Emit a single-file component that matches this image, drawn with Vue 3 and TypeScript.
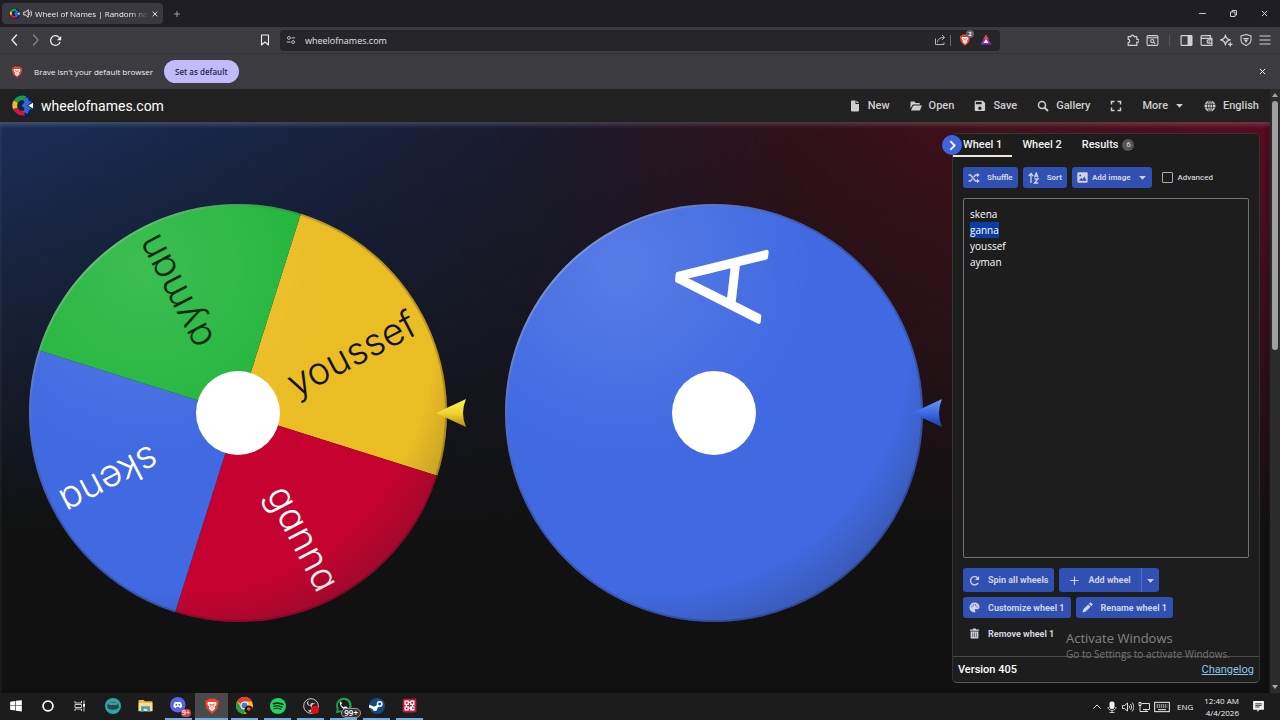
<script setup lang="ts">
import { h, onMounted, ref } from 'vue'

const glyphs: Record<string, string> = {
  close: '<path d="M5 5l14 14M19 5L5 19" fill="none" stroke="currentColor" stroke-width="2.6"/>',
  plus: '<path d="M12 3v18M3 12h18" fill="none" stroke="currentColor" stroke-width="2.4"/>',
  minimize: '<path d="M3 12h18" stroke="currentColor" stroke-width="2.4"/>',
  restore: '<path d="M4 8h12v12H4zM8 8V4h12v12h-4" fill="none" stroke="currentColor" stroke-width="2.4"/>',
  back: '<path d="M15 2L6 12l9 10" fill="none" stroke="currentColor" stroke-width="2.6" stroke-linecap="round"/>',
  forward: '<path d="M9 2l9 10-9 10" fill="none" stroke="currentColor" stroke-width="2.6" stroke-linecap="round"/>',
  reload: '<path d="M20.5 14.5A9 9 0 1 1 19 6.5" fill="none" stroke="currentColor" stroke-width="2.3"/><path d="M22.5 3.500v8h-8z" fill="currentColor"/>',
  bookmark: '<path d="M5 2h14v20l-7-6-7 6z" fill="none" stroke="currentColor" stroke-width="2.2" stroke-linejoin="round"/>',
  tune: '<g fill="none" stroke="currentColor" stroke-width="2.4"><circle cx="7" cy="7" r="3.500"/><circle cx="17" cy="17" r="3.500"/><path d="M13 7h9M2 17h9"/></g>',
  share: '<g fill="none" stroke="currentColor" stroke-width="2"><path d="M3 9v12h17v-4"/><path d="M7 17c0-6 4-10 14-10M16 2l5 5-5 5"/></g>',
  puzzle: '<path d="M4 5h5a3 3 0 1 1 6 0h5v5a2.800 2.800 0 1 1 0 5v6H4v-5a3 3 0 0 0 0-6z" fill="none" stroke="currentColor" stroke-width="2.2" stroke-linejoin="round"/>',
  finder: '<g fill="none" stroke="currentColor" stroke-width="2"><rect x="2" y="3" width="20" height="18" rx="2"/><path d="M2 7h20"/><circle cx="11.500" cy="13" r="3"/><path d="M14 15l3 3"/></g>',
  sidebar: '<rect x="2" y="3" width="20" height="18" rx="1" fill="none" stroke="currentColor" stroke-width="2.2"/><path d="M14 3h8v18h-8z" fill="currentColor"/>',
  wallet: '<g fill="none" stroke="currentColor" stroke-width="2.2"><path d="M19 7V3H4a2 2 0 0 0-2 2v14a2 2 0 0 0 2 2h18V8H3"/><path d="M22 11h-6a3 3 0 0 0 0 6h6M16 14h2"/></g>',
  sparkle: '<path d="M10 2c1 6 3 8 9 9-6 1-8 3-9 9-1-6-3-8-9-9 6-1 8-3 9-9z" fill="none" stroke="currentColor" stroke-width="2.2" stroke-linejoin="round"/><path d="M19 15v8M15 19h8" stroke="currentColor" stroke-width="2.4"/>',
  vpn: '<path d="M12 1l10 3v8c0 5-5 9-10 11C7 21 2 17 2 12V4z" fill="none" stroke="currentColor" stroke-width="2.2"/><path d="M6 8h12l-6 10z" fill="currentColor"/><path d="M7 11h10" stroke="#3c3b40"/>',
  menu: '<path d="M1 4h22M1 12h22M1 20h22" stroke="currentColor" stroke-width="2.4"/>',
  sound: '<path d="M2 8h5l7-6v20l-7-6H2z" fill="none" stroke="currentColor" stroke-width="2.400"/><path d="M17 8c2 2 2 6 0 8M20 4c4 4 4 12 0 16" fill="none" stroke="currentColor" stroke-width="2.200"/>',
  file: '<path d="M13 1v7h7v13a2 2 0 0 1-2 2H6a2 2 0 0 1-2-2V3a2 2 0 0 1 2-2zM15 1l5 5h-5z" fill="currentColor"/>',
  folder: '<path d="M1 5c0-1.100.9-2 2-2h6l2.500 3H18a2 2 0 0 1 2 2v1H7a3 3 0 0 0-2.700 1.800L1 17zM2 21l4-9a2 2 0 0 1 1.800-1H24l-4 9a2 2 0 0 1-1.800 1z" fill="currentColor"/>',
  save: '<path d="M15,9H5V5H15M12,19A3,3 0 0,1 9,16A3,3 0 0,1 12,13A3,3 0 0,1 15,16A3,3 0 0,1 12,19M17,3H5C3.89,3 3,3.9 3,5V19A2,2 0 0,0 5,21H19A2,2 0 0,0 21,19V7L17,3Z" fill="currentColor" transform="translate(-2 -2) scale(1.15)"/>',
  search: '<g fill="none" stroke="currentColor" stroke-width="3"><circle cx="10" cy="10" r="7"/><path d="M15 15l7 7" stroke-width="3.600"/></g>',
  full: '<path d="M3 9V3h6M15 3h6v6M21 15v6h-6M9 21H3v-6" fill="none" stroke="currentColor" stroke-width="3"/>',
  down: '<path d="M3 8h18l-9 10z" fill="currentColor"/>',
  globe: '<circle cx="12" cy="12" r="11" fill="currentColor"/><g fill="none" stroke="#212121" stroke-width="1.500"><ellipse cx="12" cy="12" rx="5" ry="11"/><path d="M1 8.500h22M1 15.500h22M12 1v22"/></g>',
  chevron: '<path d="M8 4l8 8-8 8" fill="none" stroke="currentColor" stroke-width="3.400"/>',
  shuffle: '<g fill="none" stroke="currentColor" stroke-width="2.600"><path d="M1 6h4l10 12h4M1 18h4l3.500-4M11.500 10L15 6h4"/></g><path d="M18 1.500L23.500 6 18 10.500zM18 13.500l5.500 4.500-5.500 4.500z" fill="currentColor"/>',
  sort: '<g fill="none" stroke="currentColor" stroke-width="2.600"><path d="M6 22V4M1.500 8L6 3l4.500 5M13 11l3.500-9L20 11M14 8h5M13 14h7l-7 8h7.500"/></g>',
  image: '<path d="M21,19V5C21,3.89 20.1,3 19,3H5A2,2 0 0,0 3,5V19A2,2 0 0,0 5,21H19A2,2 0 0,0 21,19Z" fill="currentColor" transform="translate(-3 -3) scale(1.25)"/><path d="M4 19l5-6 3 3 4-6 5 9z" fill="#3150b4"/><circle cx="7" cy="7.500" r="2" fill="#3150b4"/>',
  spin: '<path d="M20 17a9 9 0 1 1-1.500-11" fill="none" stroke="currentColor" stroke-width="3"/><path d="M22 2v9h-9z" fill="currentColor"/>',
  palette: '<path d="M17.5,12A1.5,1.5 0 0,1 16,10.5A1.5,1.5 0 0,1 17.5,9A1.5,1.5 0 0,1 19,10.5A1.5,1.5 0 0,1 17.5,12M14.5,8A1.5,1.5 0 0,1 13,6.5A1.5,1.5 0 0,1 14.5,5A1.5,1.5 0 0,1 16,6.5A1.5,1.5 0 0,1 14.5,8M9.5,8A1.5,1.5 0 0,1 8,6.5A1.5,1.5 0 0,1 9.5,5A1.5,1.5 0 0,1 11,6.5A1.5,1.5 0 0,1 9.5,8M6.5,12A1.5,1.5 0 0,1 5,10.5A1.5,1.5 0 0,1 6.5,9A1.5,1.5 0 0,1 8,10.5A1.5,1.5 0 0,1 6.5,12M12,1A11,11 0 0,0 1,12A11,11 0 0,0 12,23A2,2 0 0,0 14,20.5C13.5,19.5 12.73,18.5 12.73,17.5A1.5,1.5 0 0,1 14.23,16H18A5,5 0 0,0 23,11C23,5.500 18,1 12,1Z" fill="currentColor"/>',
  pencil: '<path d="M22.500 6.500c.7-.7.7-1.800 0-2.500l-2.600-2.600c-.7-.7-1.800-.7-2.500 0L15 3.800 20.200 9zM1 23l1.500-6.800L13.500 5.300l5.200 5.200L7.700 21.500z" fill="currentColor"/>',
  trash: '<path d="M2 3h6l1-2h6l1 2h6v3H2zM3.500 7.500h17V21a2 2 0 0 1-2 2h-13a2 2 0 0 1-2-2z" fill="currentColor"/><path d="M8 10v10M12 10v10M16 10v10" stroke="#1d1d1d" stroke-width="1.200"/>',
  up: '<path d="M3 16l9-9 9 9" fill="none" stroke="currentColor" stroke-width="2.200"/>',
  mic: '<rect x="7" y="1" width="10" height="15" rx="4" fill="currentColor"/><path d="M4 12c0 9 16 9 16 0M12 19v4M7 23h10" fill="none" stroke="currentColor" stroke-width="1.600"/>',
  speaker: '<g fill="none" stroke="currentColor" stroke-width="1.800"><path d="M1 9h4l6-5v16l-6-5H1zM14 9c1.500 2 1.500 4 0 6M17 6c3 4 3 8 0 12M20 3c5 6 5 12 0 18"/></g>',
  network: '<g fill="none" stroke="currentColor" stroke-width="1.800"><path d="M7 5h16v12H10M2 3h4v6H2zM4 9v12h8M16 17v4M12 21h8"/></g>',
  keyboard: '<g fill="none" stroke="currentColor" stroke-width="1.500"><rect x="1" y="5" width="22" height="14"/><path d="M4 9h16M4 12h16" stroke-dasharray="2 1"/><path d="M6 16h12"/></g>',
  notice: '<path d="M2 2h20v16h-8l-4 4v-4H2z" fill="currentColor"/><path d="M6 7h12M6 10h12M6 13h8" stroke="#1d1c1c" stroke-width="1.500"/>',
  brave: '<path d="M7 1h10l2 2.500 2-.5 1.500 4-1 2c0 6-3 10-9.500 14.500C5.500 19 2.500 15 2.500 9l-1-2L3 3l2 .5z" fill="#f0452b"/><path d="M6 6h12l1 3-3 4 .5 3-4.500 4-4.500-4 .5-3-3-4z" fill="#fff"/><path d="M8 9l3 1-1 3M16 9l-3 1 1 3M12 14v3" fill="none" stroke="#f0452b" stroke-width="1.500"/>',
  bat: '<path d="M12 1l11 20H1z" fill="#8b2fb0"/><path d="M12 1l5 9H7L1 21z" fill="#f0522c"/><path d="M12 10l5 8H7z" fill="#fff"/>',
  logo: '<circle cx="12" cy="12" r="12" fill="#0a2442"/><g fill="none" stroke-width="5"><path d="M4.600 15A8 8 0 0 0 14 19.700" stroke="#d7153a"/><path d="M5 8A8 8 0 0 1 15 4.600" stroke="#16a23b"/><path d="M15 4.600l2 5M15 19.600l2-5" stroke="#3864d8"/><path d="M5 8a8 8 0 0 0-.5 7" stroke="#efbd22"/></g><path d="M11 12l5-5 6 1-5 4 5 4-6 1z" fill="#3864d8"/><path d="M18 12l5-3v6z" fill="#fff"/>',
  windows: '<path d="M2 4.500l9-1.200V11H2zM12 3.100L22 2v9H12zM2 12h9v7.700l-9-1.200zM12 12h10v9.500l-10-1.400z" fill="#fff"/>',
  cortana: '<circle cx="12" cy="12" r="8.500" fill="none" stroke="#fff" stroke-width="3"/>',
  taskview: '<g fill="none" stroke="#ddd" stroke-width="1.800"><path d="M2 2v4h13V2M2 22v-4h13v4M2 9h13v6H2zM20 1v22"/></g><path d="M18 8h4v5h-4z" fill="#fff"/>',
  teal: '<circle cx="12" cy="12" r="12" fill="#2ea6a3"/><path d="M4 10c2-5 14-5 16 0l1 4c-3 5-15 5-18 0z" fill="#24484d"/><path d="M6 8h12v2H6z" fill="#77b9b8"/>',
  explorer: '<path d="M1 3h8l2 2h12v16H1z" fill="#eebb4a"/><path d="M1 8h22v13H1z" fill="#ffdf83"/><path d="M5 13h14v9h-4v-5H9v5H5z" fill="#3f9bd5"/>',
  discord: '<circle cx="11" cy="11" r="11" fill="#5865e8"/><path d="M5 14c0-4 1-6 2-7h8c1 1 2 3 2 7l-3 2-1-2H9l-1 2z" fill="#fff"/><circle cx="9" cy="11" r="1.300" fill="#5865e8"/><circle cx="13" cy="11" r="1.300" fill="#5865e8"/>',
  chrome: '<circle cx="12" cy="12" r="12" fill="#f5c22e"/><path d="M1.600 6a12 12 0 0 1 21 .5H12a5.500 5.500 0 0 0-5 3.500z" fill="#e2402f"/><path d="M1.600 6a12 12 0 0 0 9.400 18l4.500-8.500a5.500 5.500 0 0 1-8.700-1z" fill="#2b9b4b"/><circle cx="12" cy="12" r="5.500" fill="#fff"/><circle cx="12" cy="12" r="4.200" fill="#3d7be0"/><circle cx="18" cy="18" r="6" fill="#2a1510"/><circle cx="18" cy="17" r="2.500" fill="#d2691e"/>',
  spotify: '<circle cx="12" cy="12" r="12" fill="#1ed760"/><g fill="none" stroke="#10251a" stroke-linecap="round"><path d="M5 8.500c5-1.500 10-1 14.500 1.200" stroke-width="2.400"/><path d="M5.500 12.500c4.500-1.200 8.500-.8 12.500 1.200" stroke-width="2"/><path d="M6 16c4-.9 7.500-.6 10.500 1" stroke-width="1.600"/></g>',
  obs: '<circle cx="12" cy="12" r="11" fill="#242126" stroke="#c9c9c9" stroke-width="1.500"/><g fill="#c9c9c9"><path d="M9 4c-3 4 0 7 4 7-4 2-8-1-7-5zM19 9c-5-1-7 3-5 6-4-2-4-7 0-8zM7 18c4 1 7-1 6-5 3 3 1 8-3 8z"/></g><circle cx="18" cy="17.500" r="6" fill="#e80c0c"/>',
  whatsapp: '<path d="M1 23l1.700-6A11 11 0 1 1 7 21.500z" fill="#18a34c"/><path d="M4.500 19.500l1-3.200a8 8 0 1 1 2.800 2.600z" fill="#1d1c1c"/><path d="M8 6c-3 2 0 11 8 12 3-1 2-3 1-4l-3-1-1.500 1.500c-2-1-3-2-4-4L10 9z" fill="#fff"/>',
  steam: '<circle cx="12" cy="12" r="12" fill="#114a86"/><path d="M0 12l9 4 5-5" fill="none" stroke="#fff" stroke-width="4"/><circle cx="16" cy="9" r="4.500" fill="#fff"/><circle cx="16" cy="9" r="2.200" fill="#114a86"/><circle cx="9" cy="16" r="3.500" fill="#fff"/>',
  grid: '<rect x="1" y="1" width="22" height="22" rx="3" fill="#b81f3d"/><path d="M4 4h7v7H4zM13 4h7v7h-7zM4 13h7v7H4zM13 13h7v7h-7z" fill="#fff"/><path d="M6 6h3v3H6zM15 6h3v3h-3zM6 15h3v3H6zM16 15h4v2h-4z" fill="#b81f3d"/><path d="M11 7h2M7 11v2M11 16h2M17 11v2" stroke="#fff" stroke-width="2"/>',
}

const Icon = (props: { name: string; size: number }) =>
  h('svg', {
    width: props.size,
    height: props.size,
    viewBox: '0 0 24 24',
    'aria-hidden': 'true',
    class: 'icon',
    innerHTML: glyphs[props.name],
  })
Icon.props = ['name', 'size']

const nav = [
  { label: 'New', icon: 'file' },
  { label: 'Open', icon: 'folder' },
  { label: 'Save', icon: 'save' },
  { label: 'Gallery', icon: 'search' },
]

interface Slice { name: string; angle: number; fill: string; ink: string }
const slices: Slice[] = [
  { name: 'youssef', angle: -27.5, fill: '#ebbd25', ink: '#111111' },
  { name: 'ganna', angle: 62.5, fill: '#c50230', ink: '#ffffff' },
  { name: 'skena', angle: 152.5, fill: '#416ae2', ink: '#ffffff' },
  { name: 'ayman', angle: 242.5, fill: '#22b53b', ink: '#0b2a10' },
]
const R = 209
const quarter = `M0 0L${R} 0A${R} ${R} 0 0 1 0 ${R}Z`

const apps = [
  { icon: 'windows', title: 'Start', size: 14 },
  { icon: 'cortana', title: 'Cortana', size: 14 },
  { icon: 'taskview', title: 'Task view', size: 12 },
  { icon: 'teal', title: 'Assistant', size: 16 },
  { icon: 'explorer', title: 'File Explorer', size: 15 },
  { icon: 'discord', title: 'Discord', size: 17, open: true, badge: '9+', tone: 'alert' },
  { icon: 'brave', title: 'Brave', size: 16, open: true, active: true },
  { icon: 'chrome', title: 'Chrome', size: 17, open: true },
  { icon: 'spotify', title: 'Spotify', size: 16, open: true },
  { icon: 'obs', title: 'OBS', size: 16, open: true },
  { icon: 'whatsapp', title: 'WhatsApp', size: 17, open: true, badge: '99+', tone: 'count' },
  { icon: 'steam', title: 'Steam', size: 16, open: true },
  { icon: 'grid', title: 'Recorder', size: 15, open: true },
]

const names = ref('skena\nganna\nyoussef\nayman')
const entries = ref<HTMLTextAreaElement | null>(null)
onMounted(() => {
  entries.value?.focus({ preventScroll: true })
  entries.value?.setSelectionRange(6, 11)
})
</script>

<template>
  <div class="screen">
    <div class="tabstrip">
      <div class="tab">
        <Icon name="logo" :size="11" />
        <Icon name="sound" :size="9" />
        <span class="tab-title">Wheel of Names | Random na</span>
        <button aria-label="Close tab"><Icon name="close" :size="8" /></button>
      </div>
      <button class="new-tab" aria-label="New tab"><Icon name="plus" :size="8" /></button>
      <div class="window-buttons">
        <button aria-label="Minimize"><Icon name="minimize" :size="9" /></button>
        <button aria-label="Restore"><Icon name="restore" :size="9" /></button>
        <button aria-label="Close"><Icon name="close" :size="9" /></button>
      </div>
    </div>

    <div class="toolbar">
      <div class="tools">
        <button aria-label="Back"><Icon name="back" :size="12" /></button>
        <button aria-label="Forward" class="dim"><Icon name="forward" :size="12" /></button>
        <button aria-label="Reload"><Icon name="reload" :size="13" /></button>
        <button aria-label="Bookmark" class="push"><Icon name="bookmark" :size="12" /></button>
      </div>
      <div class="address">
        <Icon name="tune" :size="10" />
        <input aria-label="Address" value="wheelofnames.com" />
        <Icon name="share" :size="12" />
        <i class="rule"></i>
        <span class="shield"><Icon name="brave" :size="12" /><b>2</b></span>
        <Icon name="bat" :size="12" />
      </div>
      <div class="tools right">
        <button aria-label="Extensions"><Icon name="puzzle" :size="13" /></button>
        <button aria-label="Search tabs"><Icon name="finder" :size="13" /></button>
        <i class="rule faint"></i>
        <button aria-label="Sidebar"><Icon name="sidebar" :size="13" /></button>
        <button aria-label="Wallet"><Icon name="wallet" :size="13" /></button>
        <button aria-label="Assistant"><Icon name="sparkle" :size="13" /></button>
        <button aria-label="VPN"><Icon name="vpn" :size="12" /></button>
        <button aria-label="Menu"><Icon name="menu" :size="12" /></button>
      </div>
    </div>

    <div class="infobar">
      <Icon name="brave" :size="12" />
      <span>Brave isn't your default browser</span>
      <button class="pill">Set as default</button>
      <button class="dismiss" aria-label="Dismiss"><Icon name="close" :size="9" /></button>
    </div>

    <div class="page">
      <div class="site">
        <header class="site-header">
          <a href="#" class="brand"><Icon name="logo" :size="23" />wheelofnames.com</a>
          <nav>
            <button v-for="n in nav" :key="n.label"><Icon :name="n.icon" :size="12" />{{ n.label }}</button>
            <button aria-label="Fullscreen"><Icon name="full" :size="12" /></button>
            <button>More<Icon name="down" :size="9" /></button>
            <button><Icon name="globe" :size="12" />English</button>
          </nav>
        </header>

        <main class="stage">
          <div class="wheels">
            <svg viewBox="0 0 476 476" role="img" aria-label="Wheel 1">
              <defs>
                <radialGradient id="shine" cx="0.28" cy="0.15" r="0.45">
                  <stop offset="0" stop-color="#fff" stop-opacity="0.12" />
                  <stop offset="1" stop-color="#fff" stop-opacity="0" />
                </radialGradient>
                <radialGradient id="shade" cx="0.36" cy="0.32" r="0.74">
                  <stop offset="0.82" stop-color="#222" stop-opacity="0" />
                  <stop offset="1" stop-color="#222" stop-opacity="0.24" />
                </radialGradient>
                <linearGradient id="rim" x1="0" y1="0" x2="1" y2="1">
                  <stop offset="0.1" stop-color="#ddd" stop-opacity="0.4" />
                  <stop offset="0.4" stop-color="#222" stop-opacity="0.25" />
                  <stop offset="1" stop-color="#000" stop-opacity="0.2" />
                </linearGradient>
                <linearGradient id="gold" x1="0" y1="0" x2="0" y2="1">
                  <stop offset="0" stop-color="#fff04f" />
                  <stop offset="0.5" stop-color="#f0d530" />
                  <stop offset="1" stop-color="#b18a12" />
                </linearGradient>
                <linearGradient id="azure" x1="0" y1="0" x2="0" y2="1">
                  <stop offset="0" stop-color="#6a96ff" />
                  <stop offset="0.5" stop-color="#3d6ae6" />
                  <stop offset="1" stop-color="#163da8" />
                </linearGradient>
              </defs>
              <g transform="translate(238 238)">
                <path v-for="s in slices" :key="s.name" :d="quarter" :fill="s.fill" :transform="`rotate(${s.angle - 45})`" />
                <circle r="209" fill="url(#shine)" />
                <text v-for="s in slices" :key="s.name" class="slice-name" x="198" y="13" :fill="s.ink" :transform="`rotate(${s.angle})`">{{ s.name }}</text>
                <circle r="209" fill="url(#shade)" />
                <circle r="208" fill="none" stroke="url(#rim)" stroke-width="2" />
                <circle r="42" fill="#fff" />
                <path d="M198 0L228-14Q222 0 228 14Z" fill="url(#gold)" />
              </g>
            </svg>
            <svg viewBox="0 0 476 476" role="img" aria-label="Wheel 2">
              <g transform="translate(238 238)">
                <circle r="209" fill="#416ae2" />
                <circle r="209" fill="url(#shine)" />
                <text class="big-letter" x="131" y="34" transform="rotate(-83.5)">A</text>
                <circle r="209" fill="url(#shade)" />
                <circle r="208" fill="none" stroke="url(#rim)" stroke-width="2" />
                <circle r="42" fill="#fff" />
                <path d="M198 0L228-14Q222 0 228 14Z" fill="url(#azure)" />
              </g>
            </svg>
          </div>

          <aside class="panel">
            <button class="toggle" aria-label="Hide panel"><Icon name="chevron" :size="13" /></button>
            <div class="tabs" role="tablist">
              <button role="tab" aria-selected="true" class="current">Wheel 1</button>
              <button role="tab">Wheel 2</button>
              <button role="tab">Results <span class="badge">6</span></button>
            </div>
            <div class="body">
              <div class="row small">
                <button class="btn"><Icon name="shuffle" :size="12" />Shuffle</button>
                <button class="btn"><Icon name="sort" :size="12" />Sort</button>
                <button class="btn tight"><Icon name="image" :size="11" />Add image<Icon name="down" :size="9" /></button>
                <label class="check"><input type="checkbox" />Advanced</label>
              </div>
              <textarea ref="entries" v-model="names" aria-label="Entries" spellcheck="false"></textarea>
              <div class="actions">
                <div class="row">
                  <button class="btn tall"><Icon name="spin" :size="11" />Spin all wheels</button>
                  <div class="split">
                    <button class="btn tall"><Icon name="plus" :size="11" />Add wheel</button>
                    <button class="btn tall more" aria-label="More ways to add"><Icon name="down" :size="9" /></button>
                  </div>
                </div>
                <div class="row">
                  <button class="btn"><Icon name="palette" :size="11" />Customize wheel 1</button>
                  <button class="btn"><Icon name="pencil" :size="11" />Rename wheel 1</button>
                </div>
                <div class="row">
                  <button class="btn flat"><Icon name="trash" :size="11" />Remove wheel 1</button>
                </div>
              </div>
            </div>
            <footer><span>Version 405</span><a href="#">Changelog</a></footer>
          </aside>
        </main>
      </div>
      <div class="scrollbar"><i class="cap"></i><i class="thumb"></i><i class="cap end"></i></div>
    </div>

    <div class="watermark">
      <p>Activate Windows</p>
      <small>Go to Settings to activate Windows.</small>
    </div>

    <div class="taskbar">
      <button v-for="a in apps" :key="a.icon" class="app" :class="{ open: a.open, active: a.active }" :aria-label="a.title">
        <Icon :name="a.icon" :size="a.size" />
        <b v-if="a.badge" :class="a.tone">{{ a.badge }}</b>
      </button>
      <div class="tray">
        <Icon name="up" :size="10" />
        <Icon name="mic" :size="12" />
        <Icon name="speaker" :size="12" />
        <Icon name="network" :size="12" />
        <Icon name="keyboard" :size="16" />
        <span>ENG</span>
        <time><span>12:40 AM</span><span>4/4/2026</span></time>
        <Icon name="notice" :size="13" />
      </div>
    </div>
  </div>
</template>

<style>
body { margin: 0; background: #111; }
</style>

<style scoped>
* { box-sizing: border-box; }
.screen {
  position: relative;
  display: flex;
  flex-direction: column;
  min-height: 100vh;
  font-family: "Open Sans", "Noto Sans", sans-serif;
  font-size: 9px;
  color: #f0f0f2;
}
button {
  display: inline-flex;
  align-items: center;
  justify-content: center;
  padding: 0;
  border: 0;
  background: none;
  color: inherit;
  font: inherit;
}
.icon { display: block; flex: none; }

.tabstrip { display: flex; align-items: center; height: 27px; padding-left: 2px; background: #1f1e24; }
.tab {
  display: flex;
  align-items: center;
  gap: 3px;
  width: 161px;
  height: 21px;
  padding: 0 6px 0 7px;
  border-radius: 4px;
  background: #3a393f;
  font-size: 8px;
}
.tab-title {
  flex: 1;
  white-space: nowrap;
  -webkit-mask-image: linear-gradient(90deg, #000 85%, transparent);
  mask-image: linear-gradient(90deg, #000 85%, transparent);
}
.new-tab { margin-left: 10px; color: #b5b5b9; }
.window-buttons { display: flex; gap: 22px; margin-left: auto; padding-right: 11px; color: #dcdcde; }

.toolbar { display: grid; grid-template-columns: 280px 1fr 280px; align-items: center; height: 27px; background: #3c3b40; border-bottom: 1px solid #343338; }
.tools { display: flex; align-items: center; gap: 8px; padding: 0 9px; }
.tools .push { margin-left: auto; }
.tools .dim { color: #85848a; }
.tools.right { justify-content: flex-end; gap: 7px; padding-right: 9px; color: #d2d2d5; }
.address { display: flex; align-items: center; height: 21px; padding: 0 8px 0 6px; border-radius: 4px; background: #26252a; color: #b9b9bd; }
.address input { flex: 1; min-width: 0; margin-left: 9px; padding: 0; border: 0; outline: 0; background: none; color: #e3e3e5; font: inherit; }
.rule { width: 1px; height: 11px; margin: 0 8px 0 4px; background: #66656b; }
.rule.faint { margin: 0 3px; background: #57565b; }
.shield { position: relative; margin-right: 9px; }
.shield b { position: absolute; top: -4px; right: -3px; width: 8px; height: 8px; border-radius: 50%; background: #62626a; color: #eee; font-size: 6px; line-height: 8px; text-align: center; }

.infobar { display: flex; align-items: center; height: 35px; padding: 0 13px 0 11px; background: #3c3b40; font-size: 8px; }
.infobar span { margin-left: 11px; }
.pill { height: 23px; margin-left: 11px; padding: 0 11px; border-radius: 12px; background: #c1bbfa; color: #29254d; font-weight: 600; }
.dismiss { margin-left: auto; }

.page { flex: 1; display: flex; background: #111; }
.site { flex: 1; min-width: 0; display: flex; flex-direction: column; font-family: Roboto, sans-serif; }
.site-header { display: flex; align-items: center; justify-content: space-between; height: 33px; padding: 0 11px; background: #212121; }
.brand { display: flex; align-items: center; gap: 7px; color: #fff; font-size: 14px; text-decoration: none; }
nav { display: flex; gap: 20px; font-size: 11px; font-weight: 500; color: #cfcfcf; }
nav button { gap: 7px; }

.stage {
  flex: 1;
  display: grid;
  grid-template-columns: 1fr 308px;
  padding: 11px 10px 10px 0;
  box-shadow: inset 0 4px 4px -1px #ffffff2e, inset -4px 0 4px -2px #0006;
  background:
    linear-gradient(180deg, transparent, #111 72%),
    linear-gradient(90deg, #1b2d57 0, #172240 26%, #1c1a2c 44%, #301019 62%, #42101c 78%, #5b0b22);
}
.wheels { display: grid; grid-template-columns: 1fr 1fr; align-items: center; padding-top: 10px; }
.wheels svg { display: block; width: 100%; }
.slice-name { font-family: Inter, sans-serif; font-feature-settings: "cv11"; font-size: 38px; font-weight: 300; text-anchor: end; }
.big-letter { font-family: Inter, sans-serif; font-size: 118px; font-weight: 200; fill: #fff; stroke: #fff; stroke-width: 4px; stroke-linejoin: round; text-anchor: middle; }

.panel { position: relative; display: flex; flex-direction: column; border: 1px solid #343434; border-bottom-color: #5a5a5a; border-radius: 5px; background: #1d1d1d; }
.toggle { position: absolute; top: 1px; left: -11px; width: 20px; height: 20px; border-radius: 50%; background: #3b64dd; color: #fff; }
.tabs { display: flex; font-size: 11px; font-weight: 500; color: #f2f2f2; }
.tabs button { height: 23px; padding: 0 10px; border-bottom: 2px solid transparent; }
.tabs .current { border-color: #e8e8e0; }
.badge { width: 12px; height: 12px; margin-left: 4px; border-radius: 50%; background: #555; color: #ccc; font-size: 8px; line-height: 12px; }
.body { flex: 1; display: flex; flex-direction: column; padding: 10px 10px 12px; }
.row { display: flex; align-items: center; gap: 5px; }
.btn { gap: 8px; height: 21px; padding: 0 6px; border-radius: 3px; background: #3150b4; color: #d0d3df; font-size: 9px; font-weight: 700; white-space: nowrap; }
.small .btn { padding: 0 5px; font-size: 8px; }
.small .btn { gap: 7px; }
.small .btn.tight { gap: 4px; }
.btn.tight .icon:last-child { margin-left: 3px; }
.btn.tall { height: 24px; }
.btn.flat { background: none; }
.check { display: flex; align-items: center; gap: 5px; margin-left: 5px; color: #d0d0d0; font-size: 8px; font-weight: 500; }
.check input { appearance: none; width: 11px; height: 11px; margin: 0; border: 1px solid #aaa; border-radius: 1px; }
textarea {
  flex: 1;
  display: block;
  width: 100%;
  margin: 10px 0;
  padding: 7px 6px;
  border: 1px solid #737373;
  border-radius: 2px;
  outline: 0;
  resize: none;
  background: none;
  color: #fff;
  font: 10px/16px "Open Sans", "Noto Sans", sans-serif;
}
textarea::selection { background: #0c3ca6; color: #fff; }
.actions { display: flex; flex-direction: column; gap: 5px; }
.split { display: flex; }
.split .btn { padding: 0 10px; border-radius: 3px 0 0 3px; }
.split .btn.more { padding: 0 4px; border-left: 1px solid #5470c4; border-radius: 0 3px 3px 0; }
footer { display: flex; align-items: center; justify-content: space-between; height: 26px; padding: 0 5px; border-top: 1px solid #4c4c4c; color: #fff; font-size: 11px; font-weight: 500; }
footer a { color: #8cc8e6; font-weight: 400; }

.scrollbar { display: flex; flex-direction: column; align-items: center; width: 10px; background: #2b2b2b; padding: 4px 0; }
.cap { border: 3px solid transparent; border-top: 0; border-bottom: 4px solid #a5a5a5; }
.cap.end { margin-top: auto; border-bottom: 0; border-top: 4px solid #a5a5a5; }
.thumb { width: 6px; height: 249px; margin-top: 4px; border-radius: 3px; background: #9f9f9f; }

.watermark { position: absolute; right: 56px; bottom: 59px; width: 158px; white-space: nowrap; pointer-events: none; }
.watermark p { margin: 0; font-size: 13px; line-height: 17px; color: #858585; }
.watermark small { display: block; font-size: 10px; line-height: 14px; color: #757575; }

.taskbar { display: flex; height: 27px; background: #1d1c1c; }
.app { position: relative; width: 32px; height: 27px; border-bottom: 2px solid transparent; }
.app:nth-child(n + 4) { width: 33px; }
.app.open:nth-child(n + 4) { border-bottom-color: #73acdc; width: 27px; margin: 0 3px; }
.app.active:nth-child(n + 4) { width: 33px; margin: 0; background: #4b4a4a; }
.app b { position: absolute; border-radius: 6px; color: #fff; font-size: 7px; line-height: 8px; font-weight: 600; }
.app .alert { right: 1px; bottom: 1px; padding: 0 1px; background: #d9404d; }
.app .count { right: -4px; bottom: 0; padding: 0 2px; background: #333; border: 1px solid #999; font-size: 8px; }
.tray { display: flex; align-items: center; gap: 4px; margin-left: auto; padding-right: 15px; font-size: 8px; }
.tray > span { margin: 0 7px 0 3px; }
time { display: flex; flex-direction: column; align-items: flex-end; line-height: 12px; margin-right: 9px; }
</style>
